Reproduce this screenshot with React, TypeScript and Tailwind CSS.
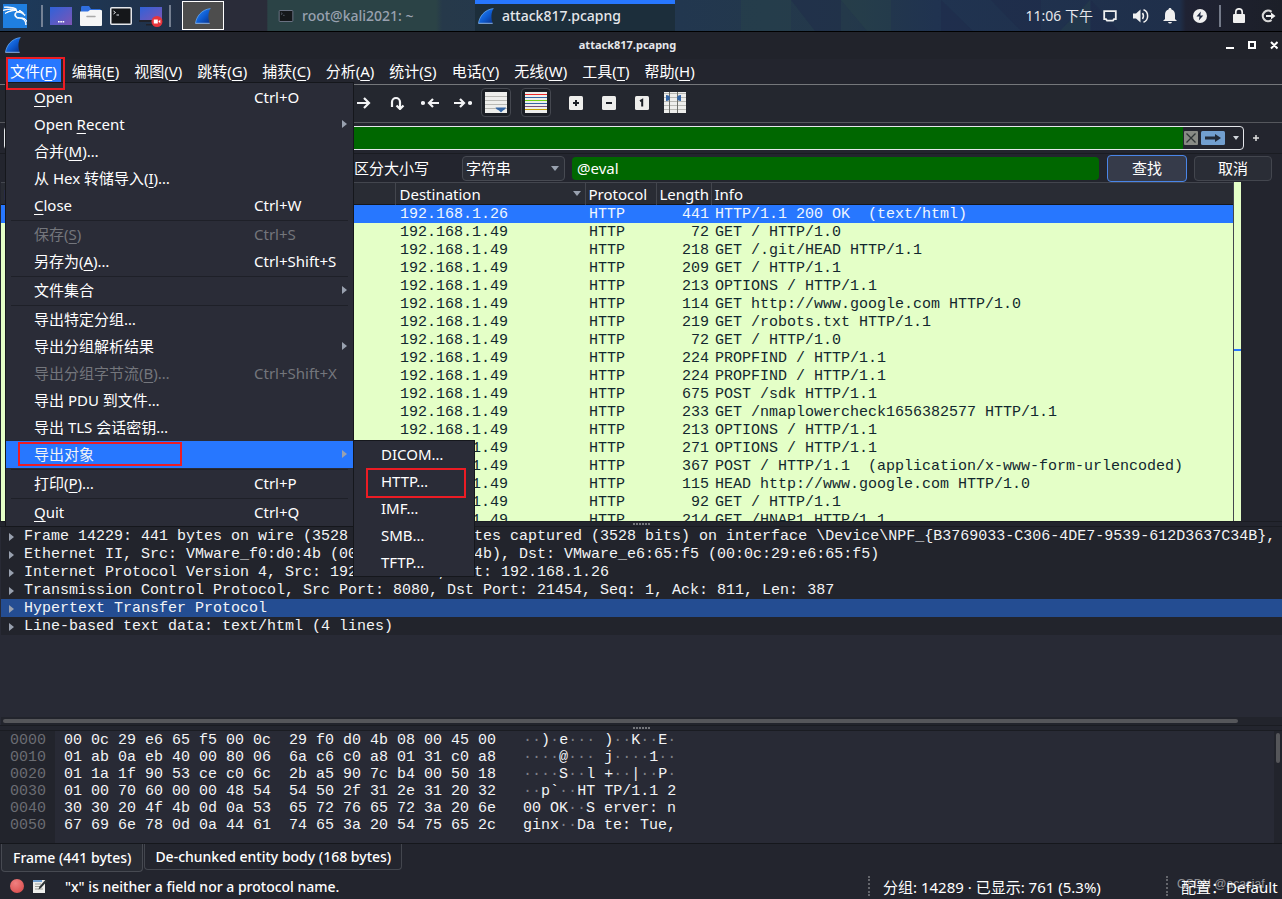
import { useState } from 'react';
import type { ReactNode } from 'react';
import { SiKalilinux } from 'react-icons/si';

interface MenuEntry {
    label: string;
    shortcut?: string;
    submenu?: boolean;
    disabled?: boolean;
    active?: boolean;
}

// "&" marks the underlined access key
const menus = ['文件(&F)', '编辑(&E)', '视图(&V)', '跳转(&G)', '捕获(&C)', '分析(&A)', '统计(&S)', '电话(&Y)', '无线(&W)', '工具(&T)', '帮助(&H)'];

const fileMenu: MenuEntry[][] = [
    [
        { label: '&Open', shortcut: 'Ctrl+O' },
        { label: 'Open &Recent', submenu: true },
        { label: '合并(&M)…' },
        { label: '从 Hex 转储导入(&I)…' },
        { label: '&Close', shortcut: 'Ctrl+W' },
    ],
    [
        { label: '保存(&S)', shortcut: 'Ctrl+S', disabled: true },
        { label: '另存为(&A)…', shortcut: 'Ctrl+Shift+S' },
    ],
    [{ label: '文件集合', submenu: true }],
    [
        { label: '导出特定分组…' },
        { label: '导出分组解析结果', submenu: true },
        { label: '导出分组字节流(&B)…', shortcut: 'Ctrl+Shift+X', disabled: true },
        { label: '导出 PDU 到文件…' },
        { label: '导出 TLS 会话密钥…' },
        { label: '导出对象', submenu: true, active: true },
    ],
    [{ label: '打印(&P)…', shortcut: 'Ctrl+P' }],
    [{ label: '&Quit', shortcut: 'Ctrl+Q' }],
];

const exportObjects = ['DICOM…', 'HTTP…', 'IMF…', 'SMB…', 'TFTP…'];

const packets: [string, number, string][] = [
    ['192.168.1.26', 441, 'HTTP/1.1 200 OK  (text/html)'],
    ['192.168.1.49', 72, 'GET / HTTP/1.0'],
    ['192.168.1.49', 218, 'GET /.git/HEAD HTTP/1.1'],
    ['192.168.1.49', 209, 'GET / HTTP/1.1'],
    ['192.168.1.49', 213, 'OPTIONS / HTTP/1.1'],
    ['192.168.1.49', 114, 'GET http://www.google.com HTTP/1.0'],
    ['192.168.1.49', 219, 'GET /robots.txt HTTP/1.1'],
    ['192.168.1.49', 72, 'GET / HTTP/1.0'],
    ['192.168.1.49', 224, 'PROPFIND / HTTP/1.1'],
    ['192.168.1.49', 224, 'PROPFIND / HTTP/1.1'],
    ['192.168.1.49', 675, 'POST /sdk HTTP/1.1'],
    ['192.168.1.49', 233, 'GET /nmaplowercheck1656382577 HTTP/1.1'],
    ['192.168.1.49', 213, 'OPTIONS / HTTP/1.1'],
    ['192.168.1.49', 271, 'OPTIONS / HTTP/1.1'],
    ['192.168.1.49', 367, 'POST / HTTP/1.1  (application/x-www-form-urlencoded)'],
    ['192.168.1.49', 115, 'HEAD http://www.google.com HTTP/1.0'],
    ['192.168.1.49', 92, 'GET / HTTP/1.1'],
    ['192.168.1.49', 214, 'GET /HNAP1 HTTP/1.1'],
];

const details = [
    'Frame 14229: 441 bytes on wire (3528 bits), 441 bytes captured (3528 bits) on interface \\Device\\NPF_{B3769033-C306-4DE7-9539-612D3637C34B},',
    'Ethernet II, Src: VMware_f0:d0:4b (00:0c:29:f0:d0:4b), Dst: VMware_e6:65:f5 (00:0c:29:e6:65:f5)',
    'Internet Protocol Version 4, Src: 192.168.1.49, Dst: 192.168.1.26',
    'Transmission Control Protocol, Src Port: 8080, Dst Port: 21454, Seq: 1, Ack: 811, Len: 387',
    'Hypertext Transfer Protocol',
    'Line-based text data: text/html (4 lines)',
];

const hexRows = [
    ['0000', '00 0c 29 e6 65 f5 00 0c  29 f0 d0 4b 08 00 45 00', '··)·e··· )··K··E·'],
    ['0010', '01 ab 0a eb 40 00 80 06  6a c6 c0 a8 01 31 c0 a8', '····@··· j····1··'],
    ['0020', '01 1a 1f 90 53 ce c0 6c  2b a5 90 7c b4 00 50 18', '····S··l +··|··P·'],
    ['0030', '01 00 70 60 00 00 48 54  54 50 2f 31 2e 31 20 32', '··p`··HT TP/1.1 2'],
    ['0040', '30 30 20 4f 4b 0d 0a 53  65 72 76 65 72 3a 20 6e', '00 OK··S erver: n'],
    ['0050', '67 69 6e 78 0d 0a 44 61  74 65 3a 20 54 75 65 2c', 'ginx··Da te: Tue,'],
];

function Mnemonic({ text }: { text: string }) {
    const at = text.indexOf('&');
    if (at < 0) return <>{text}</>;
    return (
        <>
            {text.slice(0, at)}
            <span className="underline decoration-1 underline-offset-3">{text[at + 1]}</span>
            {text.slice(at + 2)}
        </>
    );
}

function Fin({ className }: { className: string }) {
    return (
        <svg viewBox="0 0 16 16" className={className} aria-hidden="true">
            <defs>
                <linearGradient id="fin" x1="0" y1="0" x2="1" y2="1">
                    <stop offset="0" stopColor="#2f8bff" />
                    <stop offset="0.55" stopColor="#0d5bd0" />
                    <stop offset="1" stopColor="#0a2f86" />
                </linearGradient>
            </defs>
            <path d="M.5 15.3C1.4 8.5 6.5 1.5 15.5.6c-2.6 4.2-2.5 9.8-.9 14.7z" fill="url(#fin)" />
            <path d="M.5 15.3C1.4 8.5 6.5 1.5 15.5.6" fill="none" stroke="#6fb0f5" strokeWidth=".7" />
            <path d="M.4 15.3h14.3" stroke="#8db4e8" strokeWidth="1" />
        </svg>
    );
}

function Terminal({ className }: { className: string }) {
    return (
        <svg viewBox="0 0 22 18" className={className} aria-hidden="true">
            <rect x=".75" y=".75" width="20.5" height="16.5" rx="1" fill="#15171a" stroke="currentColor" strokeWidth="1.5" />
            <path d="M3.5 4l2 1.5-2 1.5M6.5 8h2.5" fill="none" stroke="currentColor" />
        </svg>
    );
}

function Desktop({ recording = false }: { recording?: boolean }) {
    return (
        <svg viewBox="0 0 24 22" className="h-[22px] w-6" aria-hidden="true">
            <defs>
                <linearGradient id="desk" x1="0" x2="1" y1="0" y2="1">
                    <stop offset="0" stopColor="#2f62d9" />
                    <stop offset="1" stopColor="#7d55b5" />
                </linearGradient>
            </defs>
            {recording ? (
                <>
                    <rect x="1" y="2" width="22" height="14" fill="url(#desk)" />
                    <path d="M0 15h24v2H0zM7 19h10v1.5H7z" fill="#20222a" />
                    <circle cx="18" cy="16.5" r="5.5" fill="#e8343c" />
                    <path d="M14.8 14.5h4v4h-4zM19.3 16.5l2-1.7v3.4z" fill="#fff" />
                </>
            ) : (
                <>
                    <rect x="1" y="2" width="22" height="18" fill="url(#desk)" />
                    <path d="M9 16h1.6v1.5H9zM11.3 16h1.6v1.5h-1.6zM13.6 16h1.6v1.5h-1.6z" fill="#fff" />
                </>
            )}
        </svg>
    );
}

function Folder() {
    return (
        <svg viewBox="0 0 22 20" className="h-5 w-[22px]" aria-hidden="true">
            <path d="M1 2q0-2 1-2h7l2 3h9q1 0 1 2v4H1z" fill="#2f6fe0" />
            <path d="M0 5.5h8l2-1.5h11q1 0 1 1v14q0 1-1 1H1q-1 0-1-1z" fill="#f5f5f5" />
            <path d="M7 10.5h8" stroke="#a9a9a9" strokeWidth="1.5" strokeLinecap="round" />
        </svg>
    );
}

function TaskBar() {
    const launchers: [string, ReactNode][] = [
        ['Desktop', <Desktop />],
        ['Files', <Folder />],
        ['Terminal', <Terminal className="h-[18px] w-[22px] text-gray-200" />],
        ['Recorder', <Desktop recording />],
    ];

    return (
        <header className="relative flex h-8 shrink-0 items-start overflow-hidden border-b border-black bg-[#23384a] text-sm text-gray-200">
            {/* Wallpaper strip */}
            <svg viewBox="0 0 1282 31" preserveAspectRatio="none" className="absolute inset-0 h-[31px] w-full" aria-hidden="true">
                <defs>
                    <linearGradient id="wall" x1="0" x2="1">
                        <stop offset="0" stopColor="#1d3b5c" />
                        <stop offset=".12" stopColor="#20324b" />
                        <stop offset=".18" stopColor="#2a2c39" />
                        <stop offset=".208" stopColor="#2a2c39" />
                        <stop offset=".209" stopColor="#2b4346" />
                        <stop offset=".34" stopColor="#2b4346" />
                        <stop offset=".345" stopColor="#26394a" />
                        <stop offset=".53" stopColor="#22374f" />
                        <stop offset=".66" stopColor="#24394a" />
                        <stop offset=".73" stopColor="#203350" />
                        <stop offset=".92" stopColor="#1f2f4a" />
                        <stop offset=".925" stopColor="#1f2233" />
                        <stop offset="1" stopColor="#1c1f28" />
                    </linearGradient>
                </defs>
                <path d="M0 0h1282v31H0z" fill="url(#wall)" />
                <path d="M741 0v31h32zM741 0h50v31h-18zM841 0h50v31h-24zM1090 0v31h-30z" fill="#2b4a4a" opacity=".3" />
                <path d="M791 0h50v31h-26zM941 0v31h32zM991 0h50v31h-20zM1091 0l28 31h-28z" fill="#1d2749" opacity=".4" />
            </svg>

            <div className="relative flex h-[31px] items-center pl-[3px]">
                <button aria-label="Applications" className="grid size-6 place-items-center bg-[#1f7fe0] text-white">
                    <SiKalilinux className="size-6 stroke-white stroke-1" />
                </button>
                <span className="ml-3.5 mr-1.5 h-[22px] w-0.5 bg-gray-400/70" />
                <div className="flex items-center gap-1.5">
                    {launchers.map(([name, icon]) => (
                        <button key={name} aria-label={name} className="grid size-6 place-items-center">{icon}</button>
                    ))}
                </div>
                <span className="ml-1.5 h-[22px] w-0.5 bg-gray-400/70" />
                <button aria-label="Wireshark" className="ml-[11px] grid h-[29px] w-[42px] place-items-center border border-white bg-[#4d4d4d]">
                    <Fin className="size-4" />
                </button>
            </div>

            <div className="relative ml-[43px] flex h-[31px] font-medium">
                <button className="flex w-52 items-center gap-2 pl-[11px] text-gray-400">
                    <Terminal className="h-3 w-4 text-gray-500" />
                    <span>root@kali2021: ~</span>
                </button>
                <button className="flex w-50 items-center gap-2 border-t-4 border-[#2777ff] bg-[#1c2e3b] pb-1 pl-[3px]">
                    <Fin className="size-4" />
                    <span>attack817.pcapng</span>
                </button>
            </div>

            <div className="relative ml-auto flex h-[31px] items-center pr-1.5">
                <time className="mr-2.5">11:06 下午</time>
                <svg viewBox="0 0 14 12" className="mr-4 h-3 w-3.5" fill="none" stroke="#f0f0f0" strokeWidth="1.8" aria-hidden="true">
                    <path d="M1.2 1.2h11.6v8H11l-1 1.4H4L3 9.200H1.200z" />
                </svg>
                <svg viewBox="0 0 16 14" className="mr-3.5 h-3.5 w-4" aria-hidden="true">
                    <path d="M0 4.5h3L7.5.5v13L3 9.500H0z" fill="#f0f0f0" />
                    <path d="M9.5 4q2 3 0 6M10.5.8c5.500 2 5.500 10.400 0 12.400" fill="none" stroke="#f0f0f0" strokeWidth="1.5" />
                </svg>
                <svg viewBox="0 0 14 16" className="mr-4 h-4 w-3.5" fill="#f0f0f0" aria-hidden="true">
                    <path d="M7 0c1 0 1.500.6 1.500 1.500C11 2.200 12 4.200 12 7v4l2 2H0l2-2V7c0-2.800 1-4.800 3.500-5.500C5.500.6 6 0 7 0zM5 14h4q-.5 1.500-2 1.500T5 14z" />
                </svg>
                <svg viewBox="0 0 14 14" className="size-3.5" aria-hidden="true">
                    <circle cx="7" cy="7" r="7" fill="#f0f0f0" />
                    <path d="M7.8 2.500 3.500 7.600h3l-.7 4 4.500-5.200h-3z" fill="#1f2940" />
                </svg>
                <span className="mx-3 h-[22px] w-0.5 bg-gray-400/70" />
                <svg viewBox="0 0 12 15" className="mr-4 h-[15px] w-3" aria-hidden="true">
                    <rect y="6" width="12" height="9" rx="1" fill="#f0f0f0" />
                    <path d="M2.800 6.500V4a3.200 3.200 0 0 1 6.400 0v2.500" fill="none" stroke="#f0f0f0" strokeWidth="1.7" />
                </svg>
                <svg viewBox="0 0 15 14" className="h-3.5 w-[15px]" aria-hidden="true">
                    <path d="M10.500 2.800A5.300 5.300 0 1 0 10.500 11" fill="none" stroke="#d8d8d8" strokeWidth="2.2" />
                    <path d="M5 6h5V3.500L14.500 7 10 10.500V8H5z" fill="#f0f0f0" />
                </svg>
            </div>
        </header>
    );
}

function FileMenu() {
    return (
        <div className="absolute left-0 top-6 z-10 w-[347px] bg-[#2a2c37] pt-px outline outline-[#15171c]">
            {fileMenu.map((group, g) => (
                <div key={g} className="bg-[linear-gradient(#1e2028,#1e2028)] bg-[size:calc(100%-10px)_1px] bg-[position:5px_100%] bg-no-repeat not-last:pb-0.5 last:bg-none">
                    {group.map((item) => (
                        <div key={item.label} className="relative">
                            <button
                                disabled={item.disabled}
                                className={`grid h-[27px] w-full grid-cols-[220px_1fr_auto] items-center pb-0.5 pl-7 pr-1.5 text-left ${item.active ? 'bg-[#2777ff] text-gray-100' : 'text-white'} disabled:text-[#74767c]`}
                            >
                                <span><Mnemonic text={item.label} /></span>
                                <span className="whitespace-nowrap">{item.shortcut}</span>
                                {item.submenu && <span className="size-0 border-y-4 border-l-5 border-y-transparent border-l-gray-400" />}
                            </button>
                            {item.active && (
                                <>
                                    <span className="pointer-events-none absolute left-3 top-px h-6 w-41 border-2 border-[#ec1c24]" />
                                    <ObjectMenu />
                                </>
                            )}
                        </div>
                    ))}
                </div>
            ))}
        </div>
    );
}

function ObjectMenu() {
    return (
        <div className="absolute left-full top-0 ml-px w-30 bg-[#2a2c37] outline outline-[#15171c]">
            {exportObjects.map((name) => (
                <button key={name} className="relative flex h-[27px] w-full items-center pb-0.5 pl-[27px] text-white">
                    {name}
                    {name === 'HTTP…' && <span className="pointer-events-none absolute left-3 top-0 h-[30px] w-25 border-2 border-[#ec1c24]" />}
                </button>
            ))}
        </div>
    );
}

function ToolBar() {
    const goIcons: [string, ReactNode][] = [
        ['Next', <path d="M2 7h12M9 2l5 5-5 5" />],
        ['Go to', <path d="M4 11V6a4 4 0 0 1 8 0v6M8.500 9.500 12 13l3.500-3.500" />],
        ['First', <><path d="M18 7H8M12 3 8 7l4 4" /><circle cx="2" cy="7" r="1" fill="currentColor" /></>],
        ['Last', <><path d="M0 7h10M6 3l4 4-4 4" /><circle cx="16" cy="7" r="1" fill="currentColor" /></>],
    ];
    const zoomSigns: [string, string][] = [
        ['Zoom in', 'M4 7h6M7 4v6'],
        ['Zoom out', 'M4 7h6'],
        ['Normal size', 'M5 5.200 7.200 4v6.500'],
    ];

    return (
        <div className="flex h-[39px] shrink-0 items-center border-y border-b-[#55575d] border-t-[#75777b] bg-[#24272f] pb-0.5 pl-[347px] text-gray-100">
            {goIcons.map(([name, icon]) => (
                <button key={name} aria-label={name} className="grid h-7 w-[33px] place-items-center">
                    <svg viewBox="0 0 18 14" className="h-3.5 w-[18px]" fill="none" stroke="currentColor" strokeWidth="2.2">{icon}</svg>
                </button>
            ))}
            <button aria-label="Auto scroll" className="ml-0.5 grid h-[29px] w-[30px] place-items-center rounded-sm border border-[#454850] bg-[#1c1f26]">
                <svg viewBox="0 0 22 21" className="h-[21px] w-[22px]">
                    <path d="M0 0h22v21H0z" fill="#eeeeec" />
                    <path d="M0 4.500h22M0 8.500h22M0 12.500h22M0 16.500h22" stroke="#b8b8b4" />
                    <path d="M10.500 15.500h10.500q-.5 2-3 3l-2 2-2-2q-3-1-3.500-3z" fill="#3465a4" />
                </svg>
            </button>
            <button aria-label="Colorize" className="ml-2.5 grid h-[29px] w-[30px] place-items-center rounded-sm border border-[#454850] bg-[#1c1f26]">
                <svg viewBox="0 0 22 21" className="h-[21px] w-[22px]">
                    <path d="M0 0h22v21H0z" fill="#eeeeec" />
                    <path d="M0 2.500h22" stroke="#ef2929" />
                    <path d="M0 5.500h22M0 11.500h22" stroke="#3465a4" />
                    <path d="M0 8.500h22" stroke="#73d216" />
                    <path d="M0 14.500h22" stroke="#75507b" />
                    <path d="M0 17.500h22" stroke="#c4a000" />
                </svg>
            </button>
            <div className="ml-2 flex items-center">
                {zoomSigns.map(([name, d]) => (
                    <button key={name} aria-label={name} className="grid h-7 w-[33px] place-items-center">
                        <svg viewBox="0 0 14 14" className="size-3.5">
                            <rect width="14" height="14" rx="1.5" fill="#eeeeec" />
                            <path d={d} fill="none" stroke="#1c1f26" strokeWidth="2" />
                        </svg>
                    </button>
                ))}
                <button aria-label="Resize columns" className="grid h-[29px] w-[34px] place-items-center">
                    <svg viewBox="0 0 22 21" className="h-[21px] w-[22px]">
                        <path d="M0 0h22v21H0z" fill="#eeeeec" />
                        <path d="M0 1.500h22M0 5.500h22M0 9.500h22M0 13.500h22M0 17.500h22" stroke="#b8b8b4" />
                        <path d="M5.500 0v21M13.500 0v21" stroke="#6d6f6b" />
                        <path d="M2 3q4 0 4 3t-4 3zM17 3q-4 0-4 3t4 3z" fill="#3465a4" />
                    </svg>
                </button>
            </div>
        </div>
    );
}

function FilterBar() {
    return (
        <div className="flex h-[31px] shrink-0 items-center border-b border-[#1a1c22] pl-1">
            <div className="flex h-6 flex-1 items-center rounded-sm border border-gray-200">
                <input aria-label="Display filter" className="h-full min-w-0 flex-1 bg-[#006700] px-2 text-white outline-none" />
                <button aria-label="Clear" className="ml-px">
                    <svg viewBox="0 0 14 14" className="size-3.5">
                        <rect width="14" height="14" rx="1" fill="#888a85" />
                        <path d="m2.500 2.500 9 9m0-9-9 9" stroke="#2e3436" strokeWidth="1.3" />
                    </svg>
                </button>
                <button aria-label="Apply" className="ml-[3px]">
                    <svg viewBox="0 0 24 14" className="h-3.5 w-6">
                        <rect width="24" height="14" rx="1.5" fill="#729fcf" />
                        <path d="M4 5.500h10V3l6 4-6 4V8.500H4z" fill="#222b38" />
                    </svg>
                </button>
                <button aria-label="Filter history" className="ml-2 mr-1 size-0 border-x-[3px] border-t-4 border-x-transparent border-t-gray-300" />
            </div>
            <button aria-label="Add" className="grid w-[38px] place-items-center pr-3.5">
                <svg viewBox="0 0 6 6" className="size-1.5"><path d="M3 0v6M0 3h6" stroke="#e0e0e0" strokeWidth="1.5" /></svg>
            </button>
        </div>
    );
}

function FindBar() {
    return (
        <div className="flex h-7 shrink-0 items-center pr-2.5">
            <label className="flex w-[462px] items-center gap-1.5 pl-[334px] text-white">
                <input type="checkbox" className="size-3.5" />
                区分大小写
            </label>
            <div className="relative">
                <select aria-label="Search type" className="h-[25px] w-[103px] appearance-none rounded-sm border border-[#474a52] bg-[#2a2d36] pl-[3px] text-white">
                    <option>字符串</option>
                </select>
                <span className="pointer-events-none absolute right-1.5 top-2.5 border-x-4 border-t-5 border-x-transparent border-t-gray-400" />
            </div>
            <input aria-label="Search text" defaultValue="@eval" className="ml-[7px] mr-2 h-[23px] min-w-0 flex-1 rounded-sm bg-[#006700] px-[5px] text-white outline-none" />
            <button className="h-[27px] w-20 rounded-sm border border-[#4a86e8] bg-[#363b4a] text-white">查找</button>
            <button className="ml-[7px] h-[25px] w-[78px] rounded-sm border border-[#43464e] bg-[#2a2d36] text-white">取消</button>
        </div>
    );
}

function PacketList() {
    const [selected, setSelected] = useState(0);

    return (
        <div className="flex h-[339px] shrink-0 overflow-hidden pl-px">
            <div className="min-w-0 flex-1 overflow-hidden border-r border-[#43464e] bg-[#e4ffc7]">
                <table className="w-full table-fixed border-collapse">
                    <colgroup>
                        <col className="w-[394px]" />
                        <col className="w-[190px]" />
                        <col className="w-[71px]" />
                        <col className="w-[55px]" />
                        <col />
                    </colgroup>
                    <thead>
                        <tr className="h-[23px] bg-[#292c34] text-left text-white shadow-[inset_0_1px_#43464e,inset_0_-1px_#15171c] *:border-r *:border-[#43464e] *:p-0 *:font-normal *:leading-5 *:last:border-r-0">
                            <th><span className="pl-[3px]">No.</span></th>
                            <th>
                                <span className="flex items-center justify-between px-1">
                                    Destination
                                    <span className="size-0 border-x-4 border-t-5 border-x-transparent border-t-gray-400" />
                                </span>
                            </th>
                            <th><span className="pl-[3px]">Protocol</span></th>
                            <th><span className="pl-[3px]">Length</span></th>
                            <th><span className="pl-[3px]">Info</span></th>
                        </tr>
                    </thead>
                    <tbody className="font-['Liberation_Mono',monospace] text-[#12272e]">
                        {packets.map(([dest, length, info], i) => (
                            <tr
                                key={i}
                                onClick={() => setSelected(i)}
                                className={`h-[18px] whitespace-pre *:p-0 *:pt-0.5 *:leading-4 ${i === selected ? 'bg-[#2777ff] text-blue-50' : ''}`}
                            >
                                <td />
                                <td><span className="pl-[5px]">{dest}</span></td>
                                <td><span className="pl-1">HTTP</span></td>
                                <td className="text-right"><span className="pr-0.5">{length}</span></td>
                                <td><span className="pl-1">{info}</span></td>
                            </tr>
                        ))}
                    </tbody>
                </table>
            </div>
            {/* Intelligent scrollbar: minimap of the row colours */}
            <div className="mr-[41px] w-[7px] bg-[#e4ffc7] pt-[167px]">
                <div className="h-0.5 bg-[#2777ff]" />
            </div>
        </div>
    );
}

function Splitter() {
    return (
        <div className="flex h-1.5 shrink-0 items-center justify-center gap-px border-y border-[#1a1c22]">
            {[0, 1, 2, 3, 4, 5].map((n) => <span key={n} className="size-0.5 bg-[#75777c]" />)}
        </div>
    );
}

function PacketDetails() {
    return (
        <div className="flex min-h-0 flex-1 flex-col bg-[#282a35] pl-px font-['Liberation_Mono',monospace] text-gray-100">
            <ul className="min-h-0 flex-1 overflow-hidden">
                {details.map((line) => (
                    <li
                        key={line}
                        className={`flex h-[18px] items-center gap-2.5 whitespace-pre pl-2 pt-0.5 ${line === 'Hypertext Transfer Protocol' ? 'bg-[#244d92]' : 'bg-[#22242c]'}`}
                    >
                        <span className="size-0 border-y-4 border-l-5 border-y-transparent border-l-gray-400" />
                        {line}
                    </li>
                ))}
            </ul>
            <div className="flex h-2 shrink-0 items-center bg-[#22242c] pl-0.5 pr-11">
                <div className="h-1 flex-1 rounded-full bg-[#55565a]" />
            </div>
        </div>
    );
}

function HexPane() {
    return (
        <div className="flex h-28 shrink-0 bg-[#282a35] font-['Liberation_Mono',monospace] leading-[17px] text-gray-100">
            <div className="w-[55px] bg-[#22242c] pl-2.5 pt-px text-[#6b6d73]">
                {hexRows.map(([offset]) => <div key={offset}>{offset}</div>)}
            </div>
            <div className="flex-1 whitespace-pre pl-[9px] pt-px">
                {hexRows.map(([offset, bytes, ascii]) => (
                    <div key={offset} className="flex gap-[27px]">
                        <span>{bytes}</span>
                        <span>
                            {ascii.split(/(·+)/).map((part, i) => (
                                <span key={i} className={part.startsWith('·') ? 'text-[#7d7f85]' : ''}>{part}</span>
                            ))}
                        </span>
                    </div>
                ))}
            </div>
            <div className="flex w-2 justify-center bg-[#22242c] pt-0.5">
                <div className="h-[30px] w-1 rounded-full bg-[#55565a]" />
            </div>
        </div>
    );
}

function StatusBar() {
    return (
        <footer className="flex h-[27px] shrink-0 items-center overflow-hidden text-white">
            <span className="ml-2.5 size-3.5 shrink-0 rounded-full bg-[radial-gradient(circle_at_40%_30%,#f08080,#d64545)]" />
            <svg viewBox="0 0 14 14" className="ml-[9px] size-3.5 shrink-0" aria-hidden="true">
                <path d="M0 1h12v13H0z" fill="#eeeeec" />
                <path d="M0 1h9v2H0z" fill="#729fcf" />
                <path d="M2 5h6M2 7.500h5M2 10h8" stroke="#888a85" strokeWidth=".8" />
                <path d="m5.500 10.500 1-3L12.500.8l1.500 1.400L8 9z" fill="#2e3436" />
            </svg>
            <p className="ml-[18px] flex-1 pt-0.5 text-sm font-medium">&quot;x&quot; is neither a field nor a protocol name.</p>
            <div className="flex h-5 w-[298px] items-center border-l-2 border-dotted border-[#63656b] pl-[13px] pt-0.5">
                <span>分组: 14289 · 已显示: 761 (5.3%)</span>
            </div>
            <div className="relative flex h-5 w-[116px] items-center border-l-2 border-dotted border-[#63656b] pl-[13px] pt-0.5">
                <span className="whitespace-nowrap">配置：Default</span>
                <span className="absolute left-[9px] top-0 font-['Liberation_Sans',sans-serif] text-xs text-white/50">CSDN @acaciaf</span>
            </div>
        </footer>
    );
}

export default function App() {
    const [openMenu, setOpenMenu] = useState<string | null>(menus[0]);

    return (
        <div className="flex h-screen flex-col overflow-hidden bg-[#23252e] font-['Noto_Sans','Noto_Sans_CJK_SC',sans-serif] text-[15px] leading-5">
            <TaskBar />

            {/* Title bar */}
            <div className="flex h-[27px] shrink-0 items-center bg-[#21232b] pb-0.5 pl-[5px] pr-1 text-white">
                <Fin className="size-4" />
                <h1 className="flex-1 pl-2.5 text-center text-[11px] font-bold text-gray-200">attack817.pcapng</h1>
                <svg viewBox="0 0 54 10" className="h-2.5 w-[54px]" fill="none" stroke="#fff" strokeWidth="2" aria-hidden="true">
                    <path d="M2 8h8M25 2h6v6h-6zM47 2l6.500 6.500M53.500 2 47 8.500" />
                </svg>
            </div>

            {/* Menu bar */}
            <nav className="flex h-[25px] shrink-0 gap-[7px] pl-1.5 text-white">
                {menus.map((name) => (
                    <div key={name} className="relative">
                        <button
                            onClick={() => setOpenMenu(openMenu === name ? null : name)}
                            className={`h-[25px] whitespace-nowrap px-1 pb-0.5 ${openMenu === name ? 'bg-[#2777ff]' : ''}`}
                        >
                            <Mnemonic text={name} />
                        </button>
                        {name === menus[0] && openMenu === name && (
                            <>
                                <FileMenu />
                                <span className="pointer-events-none absolute -top-0.5 left-0 z-20 h-[33px] w-[59px] border-2 border-[#ec1c24]" />
                            </>
                        )}
                    </div>
                ))}
            </nav>

            <ToolBar />
            <FilterBar />
            <FindBar />
            <PacketList />
            <Splitter />
            <PacketDetails />
            <Splitter />
            <HexPane />

            {/* Data source tabs */}
            <div className="flex h-[29px] shrink-0 items-start border-t border-[#15171c] pl-px text-sm font-medium text-white">
                <button className="h-7 rounded-b-sm border border-t-0 border-[#474a52] bg-[#292c34] px-[11px]">Frame (441 bytes)</button>
                <button className="ml-px h-[26px] rounded-b-sm border border-t-0 border-[#43464e] px-2.5">De-chunked entity body (168 bytes)</button>
            </div>

            <StatusBar />
        </div>
    );
}
